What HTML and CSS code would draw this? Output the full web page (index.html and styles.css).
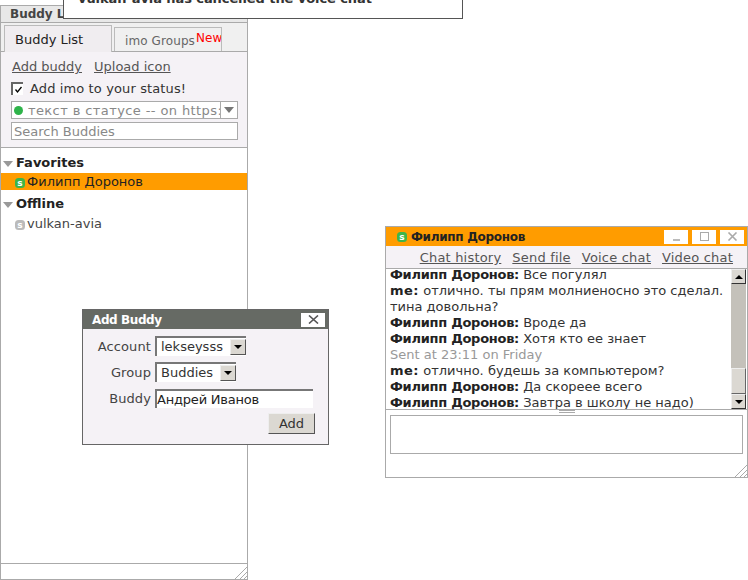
FILE: index.html
```
<!DOCTYPE html>
<html>
<head>
<meta charset="utf-8">
<title>imo</title>
<link rel="stylesheet" href="styles.css">
</head>
<body>
<section class="win buddy">
  <div class="buddy-title">Buddy List</div>
  <div class="tabs">
    <div class="tab active">Buddy List</div>
    <div class="tab inactive">imo Groups<span class="new">New</span></div>
  </div>
  <div class="panel">
    <div class="links"><a>Add buddy</a><a>Upload icon</a></div>
    <label class="check"><span class="box"><svg width="9" height="9" viewBox="0 0 9 9"><path d="M1.5 4.5 3.5 7 7.5 2" fill="none" stroke="#000" stroke-width="1.3"/></svg></span>Add imo to your status!</label>
    <div class="status"><span class="dot"></span><span class="status-text">текст в статусе -- on https://imo.im</span><span class="status-arrow"><i class="tri"></i></span></div>
    <div class="search">Search Buddies</div>
  </div>
  <div class="list">
    <div class="group"><i class="tri"></i>Favorites</div>
    <div class="contact selected"><svg class="sk" viewBox="0 0 10 10"><use href="#sk-on"/></svg>Филипп Доронов</div>
    <div class="group offline"><i class="tri"></i>Offline</div>
    <div class="contact off"><svg class="sk" viewBox="0 0 10 10"><use href="#sk-off"/></svg>vulkan-avia</div>
  </div>
  <div class="foot"><svg class="grip" width="13" height="13" viewBox="0 0 13 13"><path d="M1 13 13 1M6 13 13 6M10 13 13 10" stroke="#aaa" fill="none"/></svg></div>
</section>

<div class="notice">vulkan-avia has cancelled the voice chat</div>

<section class="win add">
  <div class="add-title"><span>Add Buddy</span><button class="x"><svg width="11" height="9" viewBox="0 0 11 9"><path d="M1 0.5 10 8.5M10 0.5 1 8.5" stroke="#555" stroke-width="1.6" fill="none"/></svg></button></div>
  <div class="form">
    <div class="row"><span class="lbl">Account</span><div class="sel">lekseysss<span class="sel-btn"><i class="mini"></i></span></div></div>
    <div class="row"><span class="lbl">Group</span><div class="sel">Buddies<span class="sel-btn"><i class="mini"></i></span></div></div>
    <div class="row"><span class="lbl">Buddy</span><div class="field">Андрей Иванов</div></div>
    <div class="actions"><button class="add-btn">Add</button></div>
  </div>
</section>

<section class="win chat">
  <div class="chat-title">
    <svg class="sk" viewBox="0 0 10 10"><use href="#sk-on"/></svg><span class="chat-name">Филипп Доронов</span>
    <span class="ctrls">
      <span class="ctrl"><svg width="11" height="9" viewBox="0 0 11 9"><path d="M2 8H9" stroke="#aaa" stroke-width="1.6"/></svg></span>
      <span class="ctrl"><svg width="11" height="11" viewBox="0 0 11 11"><rect x="1.5" y="1.5" width="8" height="8" fill="none" stroke="#aaa"/></svg></span>
      <span class="ctrl"><svg width="11" height="9" viewBox="0 0 11 9"><path d="M1.5 0.5 9.5 8.5M9.5 0.5 1.5 8.5" stroke="#aaa" stroke-width="1.6" fill="none"/></svg></span>
    </span>
  </div>
  <div class="chat-links"><a>Chat history</a><a>Send file</a><a>Voice chat</a><a>Video chat</a></div>
  <div class="log">
    <div class="msgs">
      <p><b class="name">Филипп Доронов:</b> Все погулял</p>
      <p><b class="self">me:</b> отлично. ты прям молниеносно это сделал. тина довольна?</p>
      <p><b class="name">Филипп Доронов:</b> Вроде да</p>
      <p><b class="name">Филипп Доронов:</b> Хотя кто ее знает</p>
      <p class="sent">Sent at 23:11 on Friday</p>
      <p><b class="self">me:</b> отлично. будешь за компьютером?</p>
      <p><b class="name">Филипп Доронов:</b> Да скореее всего</p>
      <p><b class="name">Филипп Доронов:</b> Завтра в школу не надо)</p>
    </div>
    <div class="scroll">
      <span class="sb-btn"><i class="mini up"></i></span>
      <span class="sb-track"><span class="sb-thumb"></span></span>
      <span class="sb-btn"><i class="mini"></i></span>
    </div>
  </div>
  <div class="divider"><i></i></div>
  <div class="compose"><div class="input"></div></div>
  <svg class="grip" width="13" height="13" viewBox="0 0 13 13"><path d="M1 13 13 1M6 13 13 6M10 13 13 10" stroke="#aaa" fill="none"/></svg>
</section>

<svg class="defs" width="0" height="0">
  <defs>
    <g id="sk-on"><rect x="0" y="0" width="10" height="10" rx="3.5" fill="#3db54a"/><text x="5" y="8" font-family="DejaVu Sans" font-size="9" font-weight="700" fill="#fff" text-anchor="middle">s</text></g>
    <g id="sk-off"><rect x="0" y="0" width="10" height="10" rx="3.5" fill="#bbb"/><text x="5" y="8" font-family="DejaVu Sans" font-size="9" font-weight="700" fill="#fff" text-anchor="middle">s</text></g>
  </defs>
</svg>
</body>
</html>
```

FILE: styles.css
```
* { box-sizing: border-box; }
html, body { margin: 0; padding: 0; }
body {
  width: 748px;
  height: 580px;
  position: relative;
  overflow: hidden;
  background: #fff;
  font-family: "DejaVu Sans", sans-serif;
  font-size: 13px;
  color: #333;
}
.defs { position: absolute; }
.win { position: absolute; }
a { text-decoration: underline; color: #555; }

/* Buddy window */
.buddy {
  left: 0; top: 5px;
  width: 248px; height: 575px;
  border: 1px solid #aaa;
  display: flex;
  flex-direction: column;
  background: #fff;
}
.buddy-title {
  height: 17px;
  background: #e8e8e8;
  border-bottom: 1px solid #aaa;
  padding-left: 9px;
  font-weight: 700;
  font-size: 12px;
  line-height: 17px;
  color: #444;
  white-space: nowrap;
}
.tabs {
  height: 29px;
  background: #f0f0f0;
  padding: 2px 0 0 3px;
  display: flex;
  align-items: flex-end;
  gap: 2px;
  border-bottom: 1px solid #aaa;
}
.tab { border: 1px solid #bbb; border-bottom: none; white-space: nowrap; }
.tab.active {
  width: 108px; height: 27px;
  background: #f0edf0;
  line-height: 27px;
  padding-left: 10px;
  color: #222;
  margin-bottom: -1px;
  position: relative;
}
.tab.inactive {
  width: 108px; height: 24px;
  background: #f0f0f0;
  line-height: 26px;
  padding-left: 10px;
  color: #666;
  font-size: 12px;
  letter-spacing: 0.1px;
  overflow: hidden;
}
.new { color: #f00; position: relative; top: -3px; margin-left: 1px; }
.panel {
  height: 96px;
  background: #f5f2f6;
  border-bottom: 1px solid #aaa;
  padding: 6px 9px 0 10px;
}
.links { display: flex; gap: 12px; height: 20px; line-height: 17px; margin-left: 1px; }
.check { display: flex; align-items: center; height: 20px; color: #333; letter-spacing: 0.12px; }
.box {
  width: 12px; height: 13px;
  background: #fff;
  border-style: solid;
  border-color: #666;
  border-width: 2px 0 0 2px;
  margin-right: 7px;
  display: flex;
  align-items: center;
  justify-content: center;
}
.status {
  margin-top: 3px;
  height: 18px;
  background: #fff;
  border: 1px solid #aaa;
  display: flex;
  align-items: center;
  color: #888;
  overflow: hidden;
  white-space: nowrap;
}
.dot { width: 9px; height: 9px; border-radius: 50%; background: #2eb34a; margin: 0 5px 0 2px; flex: none; }
.status-text { flex: 1; overflow: hidden; letter-spacing: 0.4px; }
.status-arrow { width: 17px; height: 100%; border-left: 1px solid #aaa; display: flex; align-items: center; justify-content: center; flex: none; background: #fff; }
.tri { display: inline-block; width: 0; height: 0; border-left: 5px solid transparent; border-right: 5px solid transparent; border-top: 6px solid #777; }
.search {
  margin-top: 3px;
  height: 18px;
  background: #fff;
  border: 1px solid #aaa;
  padding-left: 2px;
  line-height: 18px;
  color: #888;
}
.list { flex: 1; padding-top: 4px; }
.group { height: 21px; padding-bottom: 1px; line-height: 19px; font-weight: 700; color: #222; padding-left: 2px; display: flex; align-items: center; }
.group .tri { margin-right: 3px; margin-top: 3px; border-top-color: #999; }
.group.offline { margin-top: 3px; }
.contact { height: 17px; line-height: 17px; display: flex; align-items: center; padding-left: 14px; }
.contact.selected { background: #ff9c00; color: #222; }
.contact.off { height: 19px; color: #444; }
.sk { width: 10px; height: 10px; margin-right: 2px; margin-top: 2px; flex: none; }
.foot { height: 16px; border-top: 1px solid #aaa; position: relative; }
.foot .grip { position: absolute; right: 0; bottom: 0; }

/* Notification */
.notice {
  position: absolute;
  left: 63px; top: -13px;
  width: 400px; height: 32px;
  background: #fff;
  border: 1px solid #555;
  border-width: 0 1px 1px 1px;
  padding-left: 14px;
  font-weight: 700;
  font-size: 13px;
  letter-spacing: -0.08px;
  color: #333;
  line-height: 23px;
  white-space: nowrap;
}

/* Add buddy */
.add {
  left: 82px; top: 309px;
  width: 247px; height: 136px;
  background: #f5f2f6;
  border: 1px solid #666;
}
.add-title {
  height: 19px;
  background: #666a64;
  color: #fff;
  font-weight: 700;
  font-size: 12px;
  display: flex;
  align-items: center;
  justify-content: space-between;
  padding: 0 3px 0 9px;
}
.add-title > span { letter-spacing: -0.4px; }
.x { width: 24px; height: 14px; border: none; padding: 0; background: #fff; display: flex; align-items: center; justify-content: center; }
.form { padding-top: 4px; }
.row { display: flex; align-items: center; height: 26px; }
.lbl { width: 68px; text-align: right; margin-right: 4px; color: #444; letter-spacing: 0.1px; }
.sel {
  height: 20px;
  background: #fff;
  border-style: solid;
  border-width: 2px 0 0 2px;
  border-color: #777;
  padding-left: 4px;
  line-height: 17px;
  display: flex;
  align-items: flex-start;
  gap: 7px;
  color: #333;
}
.sel-btn { width: 16px; height: 16px; background: #dbd8d2; border: 1px solid; border-color: #eee #555 #555 #eee; display: flex; align-items: center; justify-content: center; margin-top: 1px; }
.mini { display: inline-block; width: 0; height: 0; border-left: 4px solid transparent; border-right: 4px solid transparent; border-top: 4px solid #000; }
.mini.up { border-top: none; border-bottom: 4px solid #000; }
.field {
  width: 158px; height: 19px;
  background: #fff;
  border-style: solid;
  border-width: 2px 0 0 2px;
  border-color: #777;
  line-height: 17px;
  letter-spacing: -0.2px;
  color: #222;
  white-space: nowrap;
}
.actions { display: flex; justify-content: flex-end; padding: 2px 13px 0 0; }
.add-btn {
  width: 47px; height: 21px;
  background: #dbd8d2;
  border: 1px solid;
  border-color: #eee #555 #555 #eee;
  font: 13px "DejaVu Sans", sans-serif;
  color: #333;
  padding: 0;
}

/* Chat */
.chat {
  left: 385px; top: 226px;
  width: 363px; height: 252px;
  border: 1px solid #aaa;
  background: #fff;
}
.chat-title {
  height: 19px;
  background: #ff9c00;
  display: flex;
  align-items: center;
  padding-left: 11px;
  font-weight: 700;
  font-size: 12px;
  color: #222;
}
.chat-title .sk { margin-top: 1px; margin-right: 4px; }
.chat-name { letter-spacing: -0.3px; }
.ctrls { margin-left: auto; display: flex; gap: 4px; padding-right: 3px; }
.ctrl { width: 24px; height: 14px; background: #fff; display: flex; align-items: center; justify-content: center; }
.chat-links {
  height: 23px;
  background: #f5f2f6;
  border-bottom: 1px solid #aaa;
  display: flex;
  justify-content: flex-end;
  gap: 11px;
  padding-right: 14px;
  line-height: 24px;
  letter-spacing: 0.2px;
}
.log { height: 141px; display: flex; border-bottom: 1px solid #aaa; }
.msgs { flex: 1; padding: 0 0 0 4px; line-height: 16px; overflow: hidden; color: #333; }
.msgs p { margin: 0; position: relative; top: -2px; }
.msgs b { color: #222; }
.msgs .name { letter-spacing: -0.28px; }
.msgs .self { letter-spacing: 0.5px; }
.sent { color: #999; }
.scroll { width: 15px; margin-right: 1px; display: flex; flex-direction: column; }
.sb-btn { height: 15px; background: #dbd8d2; border: 1px solid; border-color: #eee #333 #333 #eee; display: flex; align-items: center; justify-content: center; flex: none; }
.sb-track { flex: 1; background: #c4c1ba; display: flex; flex-direction: column; justify-content: flex-end; }
.sb-thumb { height: 26px; background: #dbd8d2; border: 1px solid; border-color: #eee #666 #666 #eee; }
.divider { height: 3px; display: flex; justify-content: center; margin-top: 0; }
.divider i { width: 16px; height: 3px; border-top: 1px solid #aaa; border-bottom: 1px solid #aaa; }
.compose { padding: 2px 4px 0; }
.input { height: 39px; border: 1px solid #aaa; }
.chat > .grip { position: absolute; right: 0; bottom: 0; }
```
